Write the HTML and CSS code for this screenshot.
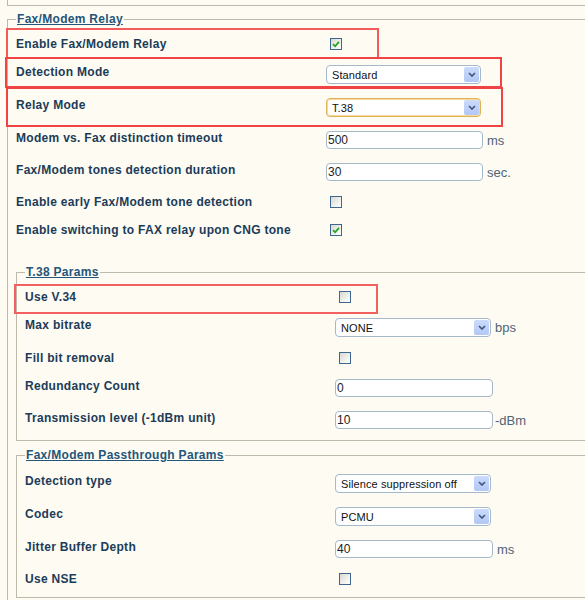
FILE: index.html
```html
<!DOCTYPE html>
<html>
<head>
<meta charset="utf-8">
<title>Fax/Modem Relay</title>
<link rel="stylesheet" href="styles.css">
</head>
<body>
<div class="prev"></div>
<fieldset class="fs outer">
  <legend>Fax/Modem Relay</legend>
  <div class="row cbr"><span class="lbl">Enable Fax/Modem Relay</span><span class="cb"><svg viewBox="0 0 8 8"><path d="M1 4.2 L3.1 6.3 L7 1.8" fill="none" stroke="#25A325" stroke-width="1.8"/></svg></span></div>
  <div class="row sel"><span class="lbl">Detection Mode</span><span class="select"><span>Standard</span><span class="arrow"><svg viewBox="0 0 8 5"><path d="M1 1 L4 4 L7 1" fill="none" stroke="#3F5478" stroke-width="1.6"/></svg></span></span></div>
  <div class="row sel"><span class="lbl">Relay Mode</span><span class="select focus"><span>T.38</span><span class="arrow"><svg viewBox="0 0 8 5"><path d="M1 1 L4 4 L7 1" fill="none" stroke="#3F5478" stroke-width="1.6"/></svg></span></span></div>
  <div class="row inp"><span class="lbl">Modem vs. Fax distinction timeout</span><span class="input">500</span><span class="unit">ms</span></div>
  <div class="row inp"><span class="lbl">Fax/Modem tones detection duration</span><span class="input">30</span><span class="unit">sec.</span></div>
  <div class="row cbr"><span class="lbl">Enable early Fax/Modem tone detection</span><span class="cb"></span></div>
  <div class="row cbr"><span class="lbl">Enable switching to FAX relay upon CNG tone</span><span class="cb"><svg viewBox="0 0 8 8"><path d="M1 4.2 L3.1 6.3 L7 1.8" fill="none" stroke="#25A325" stroke-width="1.8"/></svg></span></div>

  <fieldset class="fs inner t38">
    <legend>T.38 Params</legend>
    <div class="row cbr"><span class="lbl">Use V.34</span><span class="cb"></span></div>
    <div class="row sel"><span class="lbl">Max bitrate</span><span class="select wide"><span>NONE</span><span class="arrow"><svg viewBox="0 0 8 5"><path d="M1 1 L4 4 L7 1" fill="none" stroke="#3F5478" stroke-width="1.6"/></svg></span></span><span class="unit">bps</span></div>
    <div class="row cbr"><span class="lbl">Fill bit removal</span><span class="cb"></span></div>
    <div class="row inp"><span class="lbl">Redundancy Count</span><span class="input wide">0</span></div>
    <div class="row inp"><span class="lbl">Transmission level (-1dBm unit)</span><span class="input wide">10</span><span class="unit tight">-dBm</span></div>
  </fieldset>

  <fieldset class="fs inner pt">
    <legend>Fax/Modem Passthrough Params</legend>
    <div class="row sel"><span class="lbl">Detection type</span><span class="select wide"><span>Silence suppression off</span><span class="arrow"><svg viewBox="0 0 8 5"><path d="M1 1 L4 4 L7 1" fill="none" stroke="#3F5478" stroke-width="1.6"/></svg></span></span></div>
    <div class="row sel"><span class="lbl">Codec</span><span class="select wide"><span>PCMU</span><span class="arrow"><svg viewBox="0 0 8 5"><path d="M1 1 L4 4 L7 1" fill="none" stroke="#3F5478" stroke-width="1.6"/></svg></span></span></div>
    <div class="row inp"><span class="lbl">Jitter Buffer Depth</span><span class="input wide">40</span><span class="unit">ms</span></div>
    <div class="row cbr"><span class="lbl">Use NSE</span><span class="cb"></span></div>
  </fieldset>
</fieldset>

<div class="hl hl-enable"></div>
<div class="hl hl-detect"></div>
<div class="hl hl-relay"></div>
<div class="hl hl-v34"></div>
</body>
</html>
```
FILE: styles.css
```css
html, body {
  margin: 0;
  padding: 0;
  overflow: hidden;
}
body {
  position: relative;
  width: 585px;
  height: 600px;
  background: #FDFBF2;
  font-family: "Liberation Sans", Arial, sans-serif;
}
.prev {
  margin-left: 7px;
  height: 5px;
  border-left: 1px solid #BDBAAC;
  border-bottom: 1px solid #BDBAAC;
}
.fs {
  border: 1px solid #BDBAAC;
  border-right: none;
  margin: 0;
  padding: 4px 0 4px 8px;
  min-width: 0;
}
.outer {
  margin: 6px 0 0 7px;
  padding-bottom: 12px;
  border-bottom: none;
}
.fs legend {
  padding: 0 1px;
  font-size: 12px;
  line-height: 14px;
  font-weight: bold;
  letter-spacing: 0.3px;
  color: #25557A;
  text-decoration: underline;
}
.t38 {
  margin-top: 21px;
}
.pt {
  margin-top: 7px;
  padding-top: 5px;
}
.row {
  display: flex;
  align-items: center;
  height: 28px;
}
.row.sel {
  height: 33px;
}
.row.inp {
  height: 32px;
}
.lbl {
  flex: none;
  width: 310px;
  font-size: 12px;
  line-height: 14px;
  font-weight: bold;
  letter-spacing: 0.3px;
  color: #1C3B59;
}
.row.sel .lbl {
  margin-bottom: 6px;
}
.row.inp .lbl {
  margin-bottom: 5px;
}
.row.cbr .lbl {
  margin-bottom: 1px;
}
.cb {
  flex: none;
  box-sizing: border-box;
  width: 12px;
  height: 12px;
  margin-left: 4px;
  border: 1px solid #3D6690;
  background: linear-gradient(135deg, #D9D9D1 0%, #EFEFEA 55%, #FFFFFF 100%);
  display: flex;
  align-items: center;
  justify-content: center;
}
.cb svg {
  width: 8px;
  height: 8px;
}
.select {
  flex: none;
  box-sizing: border-box;
  width: 155px;
  height: 19px;
  border: 1px solid #A5B8CC;
  border-radius: 4px;
  background: #FFFFFF;
  display: flex;
  align-items: center;
  justify-content: space-between;
  padding: 0 1px 0 5px;
  font-size: 11px;
  letter-spacing: 0.1px;
  color: #111;
}
.select.wide {
  width: 156px;
}
.select.focus {
  border-color: #E0B155;
  box-shadow: inset 0 0 0 1px #F5D9A0;
}
.arrow {
  flex: none;
  width: 15px;
  height: 15px;
  border-radius: 2px;
  background: linear-gradient(#CCDBFC, #B2C7F5);
  display: flex;
  align-items: center;
  justify-content: center;
}
.arrow svg {
  width: 8px;
  height: 5px;
}
.input {
  flex: none;
  box-sizing: border-box;
  width: 157px;
  height: 18px;
  border: 1px solid #A6B9CB;
  border-radius: 4px;
  background: #FFFFFF;
  padding-left: 1px;
  display: flex;
  align-items: center;
  font-size: 12px;
  color: #222;
}
.input.wide {
  width: 158px;
}
.unit {
  margin-left: 4px;
  font-size: 13px;
  color: #4E6477;
}
.unit.tight {
  margin-left: 2px;
}
.hl {
  position: absolute;
  box-sizing: border-box;
  border: 2px solid #F04444;
}
.hl-enable {
  left: 6px;
  top: 28px;
  width: 373px;
  height: 31px;
  border-color: #F35A5A;
}
.hl-detect {
  left: 5px;
  top: 57px;
  width: 497px;
  height: 31px;
}
.hl-relay {
  left: 6px;
  top: 87px;
  width: 497px;
  height: 40px;
}
.hl-v34 {
  left: 14px;
  top: 284px;
  width: 364px;
  height: 30px;
  border-color: #F26060;
}
```
